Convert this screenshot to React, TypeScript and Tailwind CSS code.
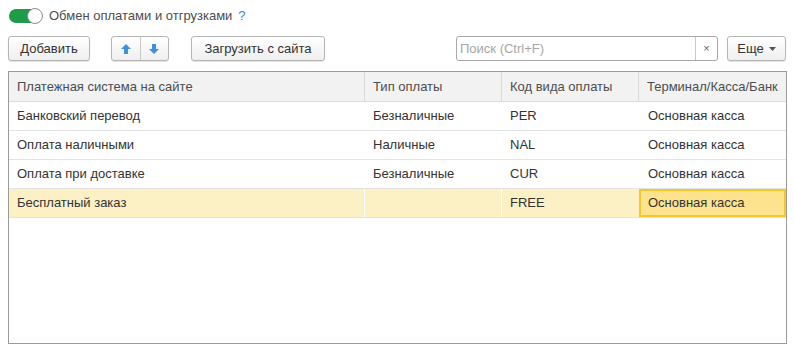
import React from 'react';

// Row data for the payment systems table
interface PaymentRow {
  name: string;
  type: string;
  code: string;
  terminal: string;
}

const rows: PaymentRow[] = [
  { name: 'Банковский перевод', type: 'Безналичные', code: 'PER', terminal: 'Основная касса' },
  { name: 'Оплата наличными', type: 'Наличные', code: 'NAL', terminal: 'Основная касса' },
  { name: 'Оплата при доставке', type: 'Безналичные', code: 'CUR', terminal: 'Основная касса' },
  { name: 'Бесплатный заказ', type: '', code: 'FREE', terminal: 'Основная касса' },
];

const btn =
  'h-[25px] flex items-center justify-center rounded-[3px] border border-[#b5b5b5] bg-gradient-to-b from-white to-[#efefef] shadow-[0_1px_1px_rgba(0,0,0,0.12)] text-[13px] text-[#333]';

function Arrow({ down }: { down?: boolean }) {
  return (
    <svg width="10" height="10" viewBox="0 0 10 10" className={down ? 'rotate-180' : ''}>
      <path d="M5 0 L10 5 L7 5 L7 10 L3 10 L3 5 L0 5 Z" fill="#3d91de" />
    </svg>
  );
}

export default function App() {
  const selectedIndex = 3;

  return (
    <div className="w-[794px] h-[350px] bg-white font-['Liberation_Sans',Arial,sans-serif] text-[13px] text-[#333] px-[8px] pt-[8px]">
      {/* Toggle */}
      <div className="flex items-center h-[16px]">
        <div className="relative w-[34px] h-[16px] ml-[1px]">
          <div className="absolute left-0 top-[1px] w-[30px] h-[14px] rounded-full bg-[#1f9b4a]" />
          <div className="absolute right-0 top-0 w-[16px] h-[16px] rounded-full bg-white border border-[#8c8c8c]" />
        </div>
        <span className="ml-[6px] text-[#4d4d4d]">Обмен оплатами и отгрузками</span>
        <span className="ml-[6px] text-[#2f86d6]">?</span>
      </div>

      {/* Command bar */}
      <div className="flex items-center mt-[12px]">
        <button className={`${btn} w-[82px]`}>Добавить</button>
        <div className={`${btn} w-[58px] ml-[21px] overflow-hidden`}>
          <div className="flex-1 h-full flex items-center justify-center border-r border-[#c8c8c8]">
            <Arrow />
          </div>
          <div className="flex-1 h-full flex items-center justify-center">
            <Arrow down />
          </div>
        </div>
        <button className={`${btn} w-[134px] ml-[22px]`}>Загрузить с сайта</button>

        <div className="ml-auto flex items-center h-[25px] w-[262px] border border-[#a8a8a8] rounded-[3px] bg-white">
          <span className="flex-1 pl-[3px] text-[#a6a6a6]">Поиск (Ctrl+F)</span>
          <div className="w-[22px] h-full flex items-center justify-center border-l border-[#c8c8c8] text-[11px] text-[#666]">
            ×
          </div>
        </div>
        <button className={`${btn} w-[59px] ml-[9px] gap-[5px]`}>
          <span>Еще</span>
          <svg width="7" height="4" viewBox="0 0 7 4">
            <path d="M0 0 L7 0 L3.5 4 Z" fill="#555" />
          </svg>
        </button>
      </div>

      {/* Table */}
      <div className="mt-[10px] w-[779px] h-[273px] border border-[#9a9a9a] bg-white">
        <div className="grid grid-cols-[356px_137px_137px_1fr] h-[30px] bg-[#f2f2f2] border-b border-[#dcdcdc] text-[#4d4d4d]">
          <div className="flex items-center pl-[8px] border-r border-[#d9d9d9]">Платежная система на сайте</div>
          <div className="flex items-center pl-[8px] border-r border-[#d9d9d9]">Тип оплаты</div>
          <div className="flex items-center pl-[8px] border-r border-[#d9d9d9]">Код вида оплаты</div>
          <div className="flex items-center pl-[8px]">Терминал/Касса/Банк</div>
        </div>

        {rows.map((row, i) => {
          const selected = i === selectedIndex;
          return (
            <div
              key={row.code}
              className={`grid grid-cols-[356px_137px_137px_1fr] h-[29px] border-b border-[#e3e3e3] ${
                selected ? 'bg-[#fcf1c5]' : 'bg-white'
              }`}
            >
              <div className={`flex items-center pl-[8px] ${selected ? 'border-r border-white' : ''}`}>{row.name}</div>
              <div className={`flex items-center pl-[8px] ${selected ? 'border-r border-white' : ''}`}>{row.type}</div>
              <div className="flex items-center pl-[8px]">{row.code}</div>
              {selected ? (
                <div className="flex items-center pl-[7px] bg-[#fde38e] border-2 border-[#f6c72d]">{row.terminal}</div>
              ) : (
                <div className="flex items-center pl-[9px]">{row.terminal}</div>
              )}
            </div>
          );
        })}
      </div>
    </div>
  );
}
